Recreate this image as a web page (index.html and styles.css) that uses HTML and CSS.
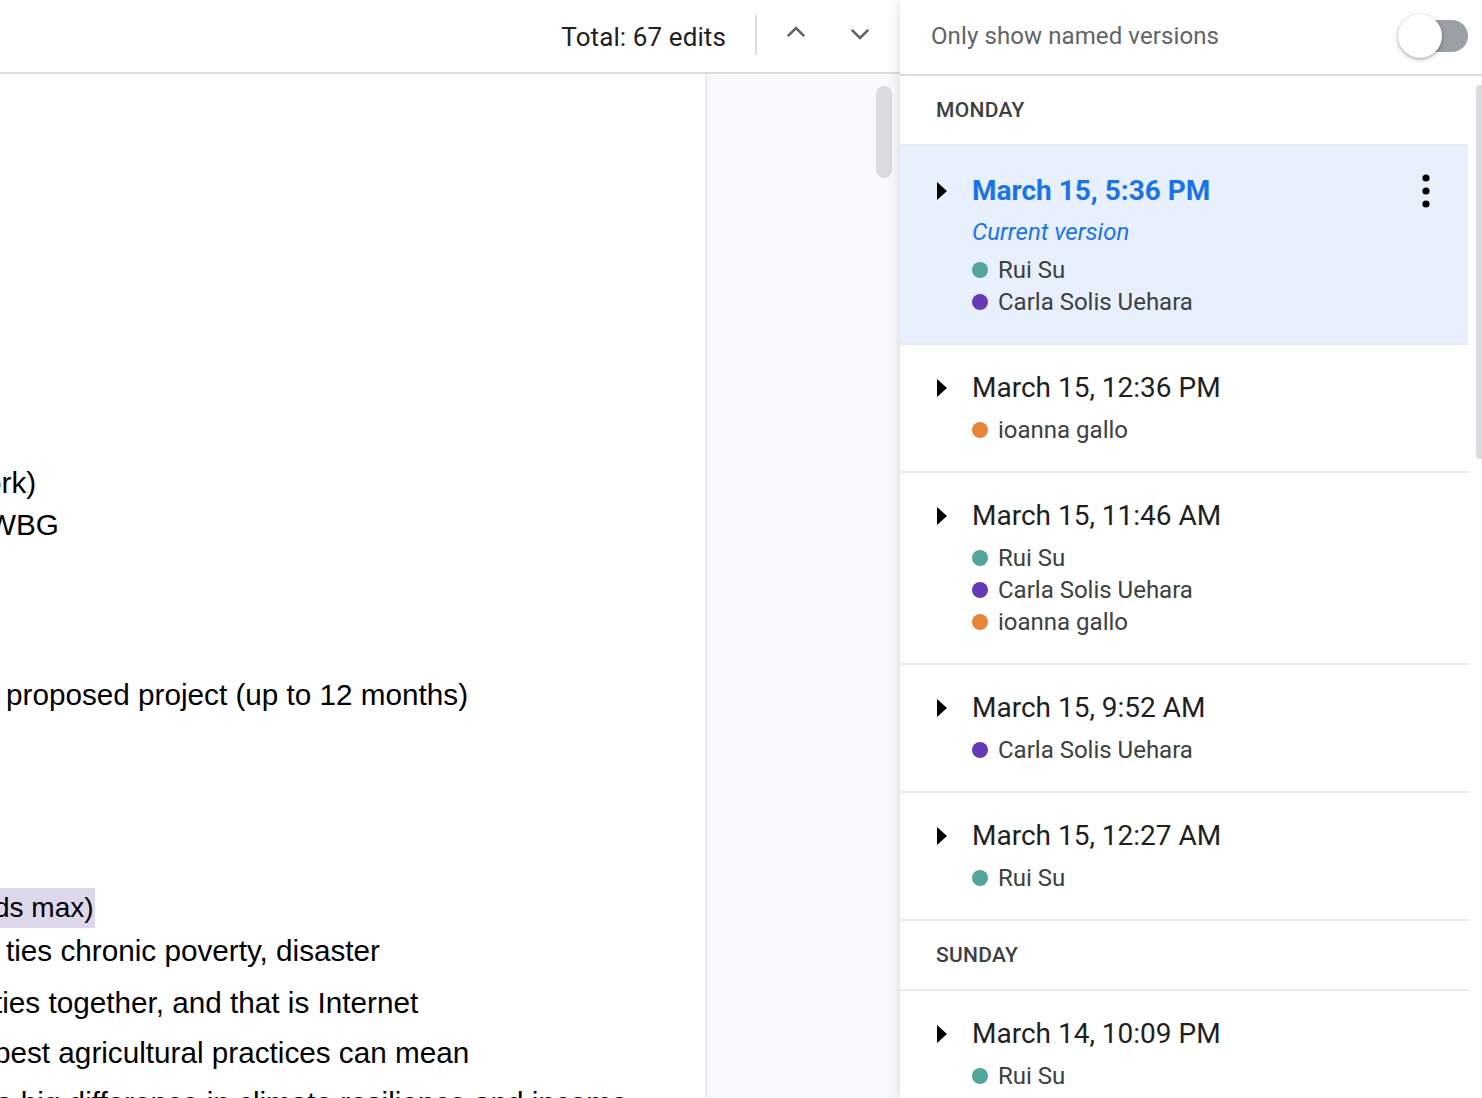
FILE: index.html
```html
<!DOCTYPE html>
<html lang="en">
<head>
<meta charset="utf-8">
<title>Version history</title>
<link rel="stylesheet" href="styles.css">
</head>
<body>
<div class="app">
  <main class="main">
    <header class="topbar">
      <span class="total">Total: 67 edits</span>
      <span class="vdivider"></span>
      <button class="navbtn" aria-label="Previous edit">
        <svg width="20" height="12" viewBox="0 0 20 12"><path d="M1.8 10.2 L10 2 L18.2 10.2" fill="none" stroke="#5f6368" stroke-width="2.6"/></svg>
      </button>
      <button class="navbtn down" aria-label="Next edit">
        <svg width="20" height="12" viewBox="0 0 20 12"><path d="M1.8 1.8 L10 10 L18.2 1.8" fill="none" stroke="#5f6368" stroke-width="2.6"/></svg>
      </button>
    </header>
    <div class="docarea">
      <div class="page">
        <div class="line l1">ork)</div>
        <div class="line l2">WBG</div>
        <div class="line l3">proposed project (up to 12 months)</div>
        <div class="line l4"><span class="hl">ds max)</span></div>
        <div class="line l5">ties chronic poverty, disaster</div>
        <div class="line l6">ties together, and that is Internet</div>
        <div class="line l7">best agricultural practices can mean</div>
        <div class="line l8">a big difference in climate resilience and income</div>
      </div>
      <div class="gutter"><div class="thumb"></div></div>
    </div>
  </main>

  <aside class="panel">
    <div class="panel-head">
      <span class="named">Only show named versions</span>
      <span class="toggle"><span class="track"></span><span class="knob"></span></span>
    </div>
    <div class="list">
      <div class="list-inner">
        <div class="day">MONDAY</div>

        <div class="item selected">
          <svg class="caret" width="10" height="18" viewBox="0 0 10 18"><polygon points="0,0 10,9 0,18" fill="#000"/></svg>
          <div class="info">
            <div class="date">March 15, 5:36 PM</div>
            <div class="current">Current version</div>
            <div class="names">
              <div class="name"><span class="dot teal"></span>Rui Su</div>
              <div class="name"><span class="dot purple"></span>Carla Solis Uehara</div>
            </div>
          </div>
          <svg class="kebab" width="8" height="34" viewBox="0 0 8 34"><circle cx="4" cy="4" r="3.6"/><circle cx="4" cy="17" r="3.6"/><circle cx="4" cy="30" r="3.6"/></svg>
        </div>

        <div class="item">
          <svg class="caret" width="10" height="18" viewBox="0 0 10 18"><polygon points="0,0 10,9 0,18" fill="#000"/></svg>
          <div class="info">
            <div class="date">March 15, 12:36 PM</div>
            <div class="names">
              <div class="name"><span class="dot orange"></span>ioanna gallo</div>
            </div>
          </div>
        </div>

        <div class="item">
          <svg class="caret" width="10" height="18" viewBox="0 0 10 18"><polygon points="0,0 10,9 0,18" fill="#000"/></svg>
          <div class="info">
            <div class="date">March 15, 11:46 AM</div>
            <div class="names">
              <div class="name"><span class="dot teal"></span>Rui Su</div>
              <div class="name"><span class="dot purple"></span>Carla Solis Uehara</div>
              <div class="name"><span class="dot orange"></span>ioanna gallo</div>
            </div>
          </div>
        </div>

        <div class="item">
          <svg class="caret" width="10" height="18" viewBox="0 0 10 18"><polygon points="0,0 10,9 0,18" fill="#000"/></svg>
          <div class="info">
            <div class="date">March 15, 9:52 AM</div>
            <div class="names">
              <div class="name"><span class="dot purple"></span>Carla Solis Uehara</div>
            </div>
          </div>
        </div>

        <div class="item">
          <svg class="caret" width="10" height="18" viewBox="0 0 10 18"><polygon points="0,0 10,9 0,18" fill="#000"/></svg>
          <div class="info">
            <div class="date">March 15, 12:27 AM</div>
            <div class="names">
              <div class="name"><span class="dot teal"></span>Rui Su</div>
            </div>
          </div>
        </div>

        <div class="day">SUNDAY</div>

        <div class="item">
          <svg class="caret" width="10" height="18" viewBox="0 0 10 18"><polygon points="0,0 10,9 0,18" fill="#000"/></svg>
          <div class="info">
            <div class="date">March 14, 10:09 PM</div>
            <div class="names">
              <div class="name"><span class="dot teal"></span>Rui Su</div>
            </div>
          </div>
        </div>
      </div>
      <div class="list-thumb"></div>
    </div>
  </aside>
</div>
</body>
</html>
```

FILE: styles.css
```css
* { box-sizing: border-box; }
html, body { margin: 0; padding: 0; }
body {
  width: 1482px;
  height: 1098px;
  overflow: hidden;
  background: #fff;
  font-family: Roboto, "Liberation Sans", Arial, sans-serif;
}
.app {
  display: flex;
  width: 1482px;
  height: 1098px;
}

/* ---------- left side ---------- */
.main {
  width: 900px;
  flex: none;
  display: flex;
  flex-direction: column;
  height: 1098px;
}
.topbar {
  height: 74px;
  flex: none;
  border-bottom: 2px solid #dadce0;
  display: flex;
  align-items: center;
  justify-content: flex-end;
  padding-right: 20px;
  padding-bottom: 2px;
}
.total {
  font-size: 26px;
  color: #202124;
  letter-spacing: 0.1px;
  margin-top: 4px;
}
.vdivider {
  width: 2px;
  height: 40px;
  background: #dadce0;
  margin-left: 29px;
  margin-right: 19px;
}
.navbtn {
  width: 40px;
  height: 40px;
  border: 0;
  background: transparent;
  padding: 0;
  display: flex;
  align-items: center;
  justify-content: center;
}
.navbtn + .navbtn { margin-left: 24px; }
.navbtn svg { display: block; margin-top: -6px; }
.navbtn.down svg { margin-top: -2px; }

.docarea {
  flex: 1;
  display: flex;
  overflow: hidden;
}
.page {
  width: 705px;
  flex: none;
  background: #fff;
  overflow: hidden;
  padding-top: 388px;
  font-family: "Liberation Sans", Arial, Helvetica, sans-serif;
  font-size: 29.7px;
  color: #000;
  box-shadow: 1px 0 3px rgba(60, 64, 67, 0.18);
  position: relative;
  z-index: 1;
}
.line {
  height: 42px;
  line-height: 42px;
  white-space: nowrap;
}
.l1 { text-indent: -15px; }
.l2 { text-indent: -12px; }
.l3 { margin-top: 128px; padding-left: 6px; }
.l4 { margin-top: 171px; text-indent: -3px; font-size: 28px; }
.hl {
  display: inline-block;
  height: 40px;
  line-height: 40px;
  background: #dcd7ea;
  padding-right: 1px;
}
.l5 { margin-top: 1px; padding-left: 6px; }
.l6 { margin-top: 10px; text-indent: -6px; }
.l7 { margin-top: 8px; text-indent: -6px; }
.l8 { margin-top: 8px; text-indent: -4px; }

.gutter {
  flex: 1;
  background: #f8f9fa;
  display: flex;
  justify-content: flex-end;
  padding: 12px 8px 0 0;
}
.thumb {
  width: 16px;
  height: 92px;
  border-radius: 8px;
  background: #dadce0;
}

/* ---------- right panel ---------- */
.panel {
  width: 582px;
  flex: none;
  height: 1098px;
  background: #fff;
  box-shadow: -3px 0 10px rgba(60, 64, 67, 0.12);
  position: relative;
  z-index: 2;
  display: flex;
  flex-direction: column;
}
.panel-head {
  height: 76px;
  flex: none;
  border-bottom: 2px solid #dadce0;
  display: flex;
  align-items: center;
  justify-content: space-between;
  padding: 0 14px 2px 31px;
}
.named {
  font-size: 24px;
  color: #5f6368;
  letter-spacing: 0.1px;
}
.toggle {
  position: relative;
  width: 70px;
  height: 44px;
  display: block;
}
.track {
  position: absolute;
  right: 0;
  top: 6px;
  width: 64px;
  height: 32px;
  border-radius: 16px;
  background: #9aa0a6;
}
.knob {
  position: absolute;
  left: 0;
  top: 0;
  width: 44px;
  height: 44px;
  border-radius: 50%;
  background: #fff;
  box-shadow: 0 1px 3px rgba(0, 0, 0, 0.3), 0 2px 6px rgba(0, 0, 0, 0.12);
}

.list {
  flex: 1;
  position: relative;
  overflow: hidden;
}
.list-inner {
  width: 568px;
}
.list-thumb {
  position: absolute;
  right: 0;
  top: 9px;
  width: 6px;
  height: 374px;
  border-radius: 4px 0 0 4px;
  background: #dadce0;
}
.day {
  height: 70px;
  border-bottom: 2px solid #e8eaed;
  padding-left: 36px;
  display: flex;
  align-items: center;
  font-size: 21px;
  font-weight: 500;
  color: #3c4043;
  letter-spacing: 0.3px;
}
.item {
  display: flex;
  align-items: flex-start;
  padding: 24px 0 25px 37px;
  border-bottom: 2px solid #e8eaed;
  position: relative;
}
.item.selected {
  background: #e8f0fe;
  padding-top: 26px;
  padding-bottom: 25px;
}
.caret {
  display: block;
  flex: none;
  margin-top: 10px;
  margin-right: 25px;
}
.info { flex: 1; }
.date {
  font-size: 28px;
  line-height: 38px;
  color: #1f1f1f;
  height: 38px;
}
.selected .date {
  color: #1a73e8;
  font-weight: 700;
}
.current {
  margin-top: 6px;
  font-size: 24px;
  line-height: 32px;
  font-style: italic;
  color: #1a73e8;
}
.names { margin-top: 7px; }
.selected .names { margin-top: 6px; }
.name {
  display: flex;
  align-items: center;
  height: 32px;
  font-size: 24px;
  color: #3c4043;
}
.dot {
  width: 16px;
  height: 16px;
  border-radius: 50%;
  margin-right: 10px;
  flex: none;
}
.teal { background: #52a598; }
.purple { background: #673ab7; }
.orange { background: #e8833a; }
.kebab {
  display: block;
  flex: none;
  margin-top: 2px;
  margin-right: 38px;
  fill: #000;
}
```
